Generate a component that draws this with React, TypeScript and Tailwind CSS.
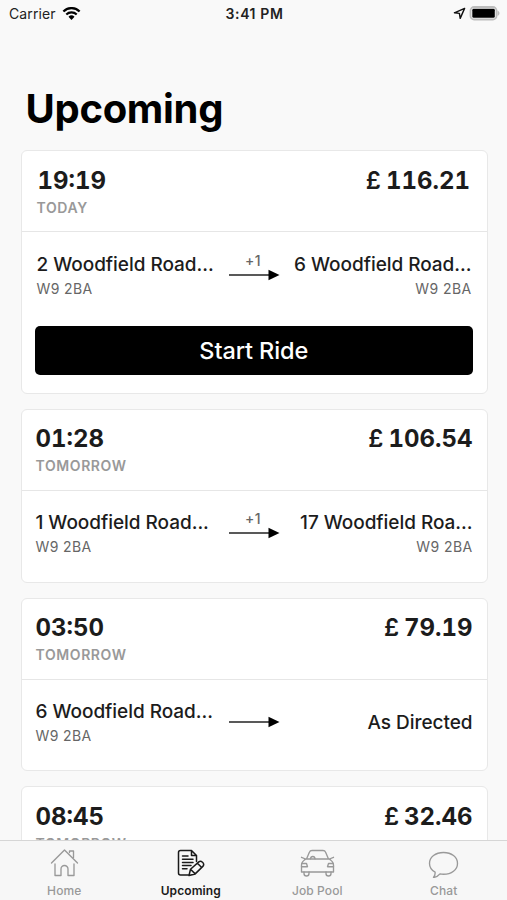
import { ReactNode } from "react";
import clsx from "clsx";

type Stop = { address: string; postcode?: string };
type Ride = {
  time: string;
  day: string;
  price: string;
  from: Stop;
  to: Stop;
  stops?: string;
  canStart?: boolean;
};

const rides: Ride[] = [
  {
    time: "19:19",
    day: "Today",
    price: "116.21",
    from: { address: "2 Woodfield Road...", postcode: "W9 2BA" },
    to: { address: "6 Woodfield Road...", postcode: "W9 2BA" },
    stops: "+1",
    canStart: true,
  },
  {
    time: "01:28",
    day: "Tomorrow",
    price: "106.54",
    from: { address: "1 Woodfield Road...", postcode: "W9 2BA" },
    to: { address: "17 Woodfield Roa...", postcode: "W9 2BA" },
    stops: "+1",
  },
  {
    time: "03:50",
    day: "Tomorrow",
    price: "79.19",
    from: { address: "6 Woodfield Road...", postcode: "W9 2BA" },
    to: { address: "As Directed" },
  },
  {
    time: "08:45",
    day: "Tomorrow",
    price: "32.46",
    from: { address: "6 Woodfield Road...", postcode: "W9 2BA" },
    to: { address: "As Directed" },
  },
];

export default function App() {
  return (
    <div className="flex h-[900px] w-[507px] flex-col overflow-hidden bg-[#f9f9f9] font-[Inter,sans-serif] text-[#1c1c1c]">
      <StatusBar />
      <h1 className="mt-14 h-[50px] shrink-0 pl-[25.5px] text-[40px] leading-[50px] font-bold tracking-[-0.3px] text-black">
        Upcoming
      </h1>
      <main className="flex min-h-0 flex-1 flex-col gap-[15px] overflow-hidden pt-4 pr-[19px] pl-[20.5px]">
        {rides.map((ride) => (
          <RideCard key={ride.time} ride={ride} />
        ))}
      </main>
      <TabBar />
    </div>
  );
}

function StatusBar() {
  return (
    <header className="grid h-7 shrink-0 grid-cols-3 items-center pr-[7px] pl-[9px] text-sm text-[#222]">
      <div className="flex items-center gap-[6px]">
        <span className="tracking-[0.1px]">Carrier</span>
        <svg width="19" height="14" viewBox="0 0 19 14" fill="none">
          <path d="M1.4 4.5a11.4 11.4 0 0 1 16.2 0" stroke="#000" strokeWidth="2.3" />
          <path d="M4.3 7.5a7.4 7.4 0 0 1 10.4 0" stroke="#000" strokeWidth="2.1" />
          <path d="M6.5 9.7a4.3 4.3 0 0 1 6 0L9.5 12.9z" fill="#000" />
        </svg>
      </div>
      <div className="text-center text-sm font-semibold tracking-[0.6px]">
        3:41 PM
      </div>
      <div className="flex items-center justify-end gap-[3px] pb-px">
        <svg width="13" height="13" viewBox="0 0 13 13" fill="none">
          <path
            d="M11.6 1.4 1.4 5.8l5 .6.8 5z"
            stroke="#111"
            strokeWidth="1.4"
            strokeLinejoin="round"
          />
        </svg>
        <svg width="31" height="15" viewBox="0 0 31 15">
          <rect x="1.5" y="1" width="26" height="12.5" rx="3.6" fill="#f9f9f9" stroke="#bdbdbd" strokeWidth="1.8" />
          <rect x="3.3" y="2.8" width="22.5" height="9" rx="1.4" fill="#000" />
          <path d="M28.5 4.5v5.5c1.2-.4 2-1.6 2-2.7s-.8-2.4-2-2.8z" fill="#bdbdbd" />
        </svg>
      </div>
    </header>
  );
}

function RideCard({ ride }: { ride: Ride }) {
  return (
    <article className="shrink-0 rounded-md border border-[#e8e8e8] bg-white">
      <div
        className={clsx(
          "flex h-[81px] items-start justify-between border-b border-[#e6e6e6]",
          ride.canStart ? "pt-[14px] pr-[17px] pl-[15px]" : "pt-[13.4px] pr-[14.5px] pl-[14px]",
        )}
      >
        <div>
          <h2
            className={clsx(
              "text-2xl leading-8 font-bold tabular-nums",
              ride.canStart && "pl-px",
            )}
          >
            {ride.time}
          </h2>
          <p className="mt-px text-sm leading-5 font-semibold tracking-[0.6px] text-[#999] uppercase">
            {ride.day}
          </p>
        </div>
        <p className="flex gap-[5px] text-2xl leading-8">
          <span className="font-semibold">£</span>
          <span className="font-bold tabular-nums">{ride.price}</span>
        </p>
      </div>
      <div
        className={clsx(
          "flex items-start justify-between",
          ride.canStart
            ? "h-[91px] pt-5 pr-[15.5px] pl-[15px]"
            : "h-[90.6px] pt-[19.4px] pr-[14.5px] pl-[14px]",
        )}
      >
        <Place stop={ride.from} />
        <Arrow label={ride.stops} />
        <Place stop={ride.to} right />
      </div>
      {ride.canStart && (
        <div className="h-[70px] pt-[3px] pr-[14px] pl-[13px]">
          <button className="h-[49px] w-full rounded-[5px] bg-black pt-px text-[23.5px] leading-none font-medium tracking-[-0.1px] text-white">
            Start Ride
          </button>
        </div>
      )}
    </article>
  );
}

function Place({ stop, right }: { stop: Stop; right?: boolean }) {
  return (
    <div
      className={clsx(
        "w-[190px] whitespace-nowrap",
        right && "text-right",
        !stop.postcode && "pt-[10.6px]",
      )}
    >
      <p className="text-[19px] leading-[26px] font-medium tracking-[-0.04px]">
        {stop.address}
      </p>
      {stop.postcode && (
        <p className="text-sm leading-[22px] tracking-[0.4px] text-[#666]">
          {stop.postcode}
        </p>
      )}
    </div>
  );
}

function Arrow({ label }: { label?: string }) {
  return (
    <div className="flex w-[51px] flex-col items-center">
      <span className="h-[17px] pr-[2px] text-sm leading-[18px] font-medium tracking-[0.3px] text-[#666]">
        {label}
      </span>
      <svg width="51" height="12" viewBox="0 0 51 12">
        <path d="M0 6h40" stroke="#222" strokeWidth="1.5" />
        <path d="M39.5.8v10.4L50.5 6z" fill="#000" />
      </svg>
    </div>
  );
}

function TabBar() {
  return (
    <nav className="grid h-[60px] shrink-0 grid-cols-4 border-t border-[#d6d6d6] bg-[#f7f7f7] pl-px">
      <Tab label="Home" width={29}>
        <path d="M1.5 15 14.500 2l13 13M5 16v11.500h6V21a3.500 3.500 0 0 1 7 0v6.500h6V16M19.500 4.500V3h4v6.500" />
      </Tab>
      <Tab label="Upcoming" width={28} active>
        <path d="M19.5 13.5V7.5L14.5 2.500H3.500Q1.500 2.500 1.500 4.500v20.500Q1.500 27 3.500 27h8M14.500 2.500v5h5M5.500 8h5.500M5.500 11.200h10.500M5.500 14.400h10.500M5.500 17.600h8.500M5.500 20.800h4.500" />
        <path
          d="m13.500 21.300 8.300-7.400q1.700-1.300 3.700.4t.6 3.800l-7.900 7.800-6.200 1.600zM20.400 15.300l4.300 4.200M13.500 21.300l4.700 4.600"
          fill="#f7f7f7"
        />
      </Tab>
      <Tab label="Job Pool" width={35}>
        <path d="M6.5 11 9.5 4Q10.100 2.500 12 2.500h11q1.900 0 2.500 1.500l3 7M4.500 11h26M1.500 9.300l4 1.700M33.500 9.300 29.500 11M6 11Q1.500 13.500 1.500 17v7h32v-7q0-3.500-4.500-6" />
        <path d="M1.800 15.500H6.500l1 3.200H1.500M33.200 15.500H28.500l-1 3.200h6M4 24v1.500Q4 28 6.500 28T9 25.500V24M26 24v1.500q0 2.500 2.500 2.500t2.500-2.500V24M10.500 10.800q.2-2.300 2.300-2.300t2.200 2.300" />
      </Tab>
      <Tab label="Chat" width={31}>
        <path d="M15.5 4.500c8 0 14 4.600 14 10.900s-6 10.800-14 10.800q-1.800 0-3.500-.3-2.600 3.100-6.500 3.600 1.900-2.500 1.600-5.300C3.600 22.100 1.500 19 1.500 15.400c0-6.300 6-10.900 14-10.900z" />
      </Tab>
    </nav>
  );
}

function Tab({
  label,
  width,
  active,
  children,
}: {
  label: string;
  width: number;
  active?: boolean;
  children: ReactNode;
}) {
  return (
    <a
      className={clsx(
        "flex flex-col items-center pt-[7px] text-xs",
        active ? "font-semibold text-[#1a1a1a]" : "font-medium text-[#999]",
      )}
    >
      <svg
        width={width}
        height="30"
        viewBox={`0 0 ${width} 30`}
        fill="none"
        stroke="currentColor"
        strokeWidth={active ? 1.5 : 1.35}
        strokeLinejoin="round"
        strokeLinecap="round"
      >
        {children}
      </svg>
      <span className="mt-[5px] leading-4 tracking-[0.1px]">{label}</span>
    </a>
  );
}
